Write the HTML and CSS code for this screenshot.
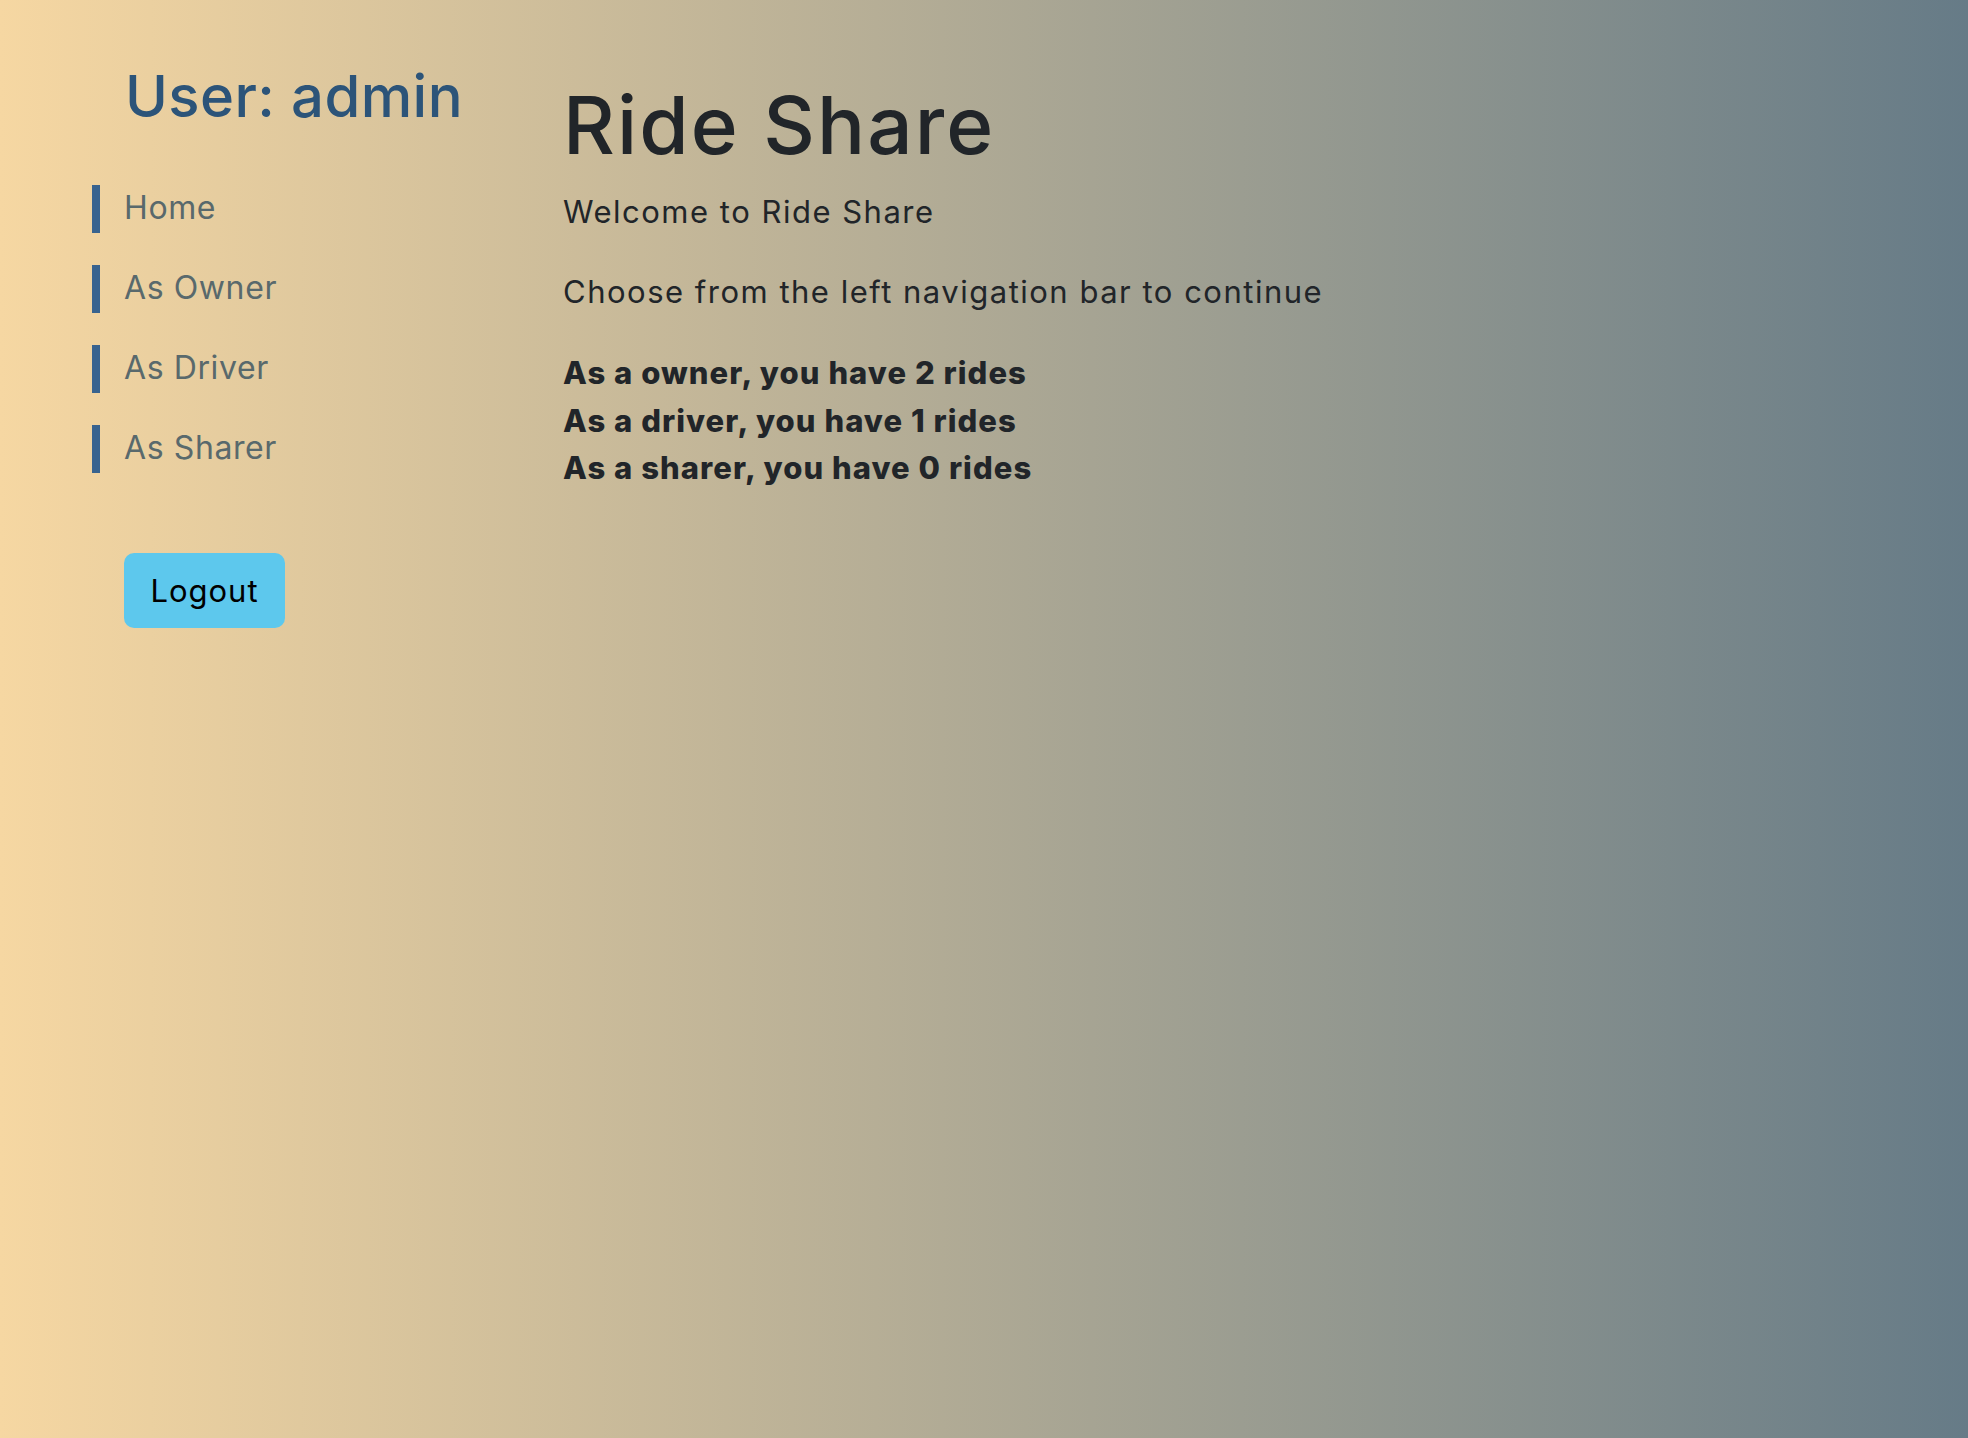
FILE: index.html
```
<!DOCTYPE html>
<html lang="en">
<head>
<meta charset="utf-8">
<title>Ride Share</title>
<link rel="stylesheet" href="styles.css">
</head>
<body>
<div class="layout">
  <aside class="sidebar">
    <h2 class="user-title">User: admin</h2>
    <nav class="side-nav">
      <a class="nav-item" href="#">Home</a>
      <a class="nav-item" href="#">As Owner</a>
      <a class="nav-item" href="#">As Driver</a>
      <a class="nav-item" href="#">As Sharer</a>
    </nav>
    <button class="logout-btn" type="button">Logout</button>
  </aside>
  <main class="main">
    <h1 class="page-title">Ride Share</h1>
    <p class="text">Welcome to Ride Share</p>
    <p class="text">Choose from the left navigation bar to continue</p>
    <div class="summary">
      <div class="summary-line">As a owner, you have 2 rides</div>
      <div class="summary-line">As a driver, you have 1 rides</div>
      <div class="summary-line">As a sharer, you have 0 rides</div>
    </div>
  </main>
</div>
</body>
</html>
```
FILE: styles.css
```
* { box-sizing: border-box; }

html, body {
  margin: 0;
  padding: 0;
}

body {
  min-height: 100vh;
  font-family: Inter, "Noto Sans", "DejaVu Sans", sans-serif;
  color: #212529;
  background: linear-gradient(to right, #f6d7a2 0%, #667b87 100%);
}

.layout {
  display: flex;
  min-height: 100vh;
}

.sidebar {
  width: 563px;
  flex: 0 0 563px;
  padding: 61px 0 0 92px;
  display: flex;
  flex-direction: column;
  align-items: flex-start;
}

.user-title {
  margin: 0 0 0 33px;
  font-size: 58px;
  line-height: 70px;
  font-weight: 500;
  color: #2c5479;
  letter-spacing: 0.4px;
}

.side-nav {
  margin-top: 54px;
  display: flex;
  flex-direction: column;
  gap: 32px;
}

.nav-item {
  display: block;
  height: 48px;
  border-left: 8px solid #38638f;
  padding: 0 0 2px 24px;
  font-size: 32px;
  line-height: 46px;
  font-weight: 400;
  letter-spacing: 0.6px;
  color: #59696c;
  text-decoration: none;
}

.logout-btn {
  margin: 80px 0 0 32px;
  width: 161px;
  height: 75px;
  display: flex;
  align-items: center;
  justify-content: center;
  border: none;
  border-radius: 10px;
  background: #5dc8ed;
  color: #000;
  font-family: inherit;
  font-size: 31px;
  font-weight: 400;
  letter-spacing: 1px;
  padding: 0;
}

.main {
  flex: 1;
  padding-top: 77px;
}

.page-title {
  margin: 0 0 16px 0;
  font-size: 80px;
  line-height: 96px;
  font-weight: 500;
  letter-spacing: 2.1px;
}

.text {
  margin: 0 0 34px 0;
  font-size: 31px;
  line-height: 46px;
  letter-spacing: 1.5px;
}

.summary {
  margin-top: 0;
}

.summary-line {
  font-size: 31px;
  line-height: 47.5px;
  font-weight: 800;
  letter-spacing: 1.05px;
}
```
